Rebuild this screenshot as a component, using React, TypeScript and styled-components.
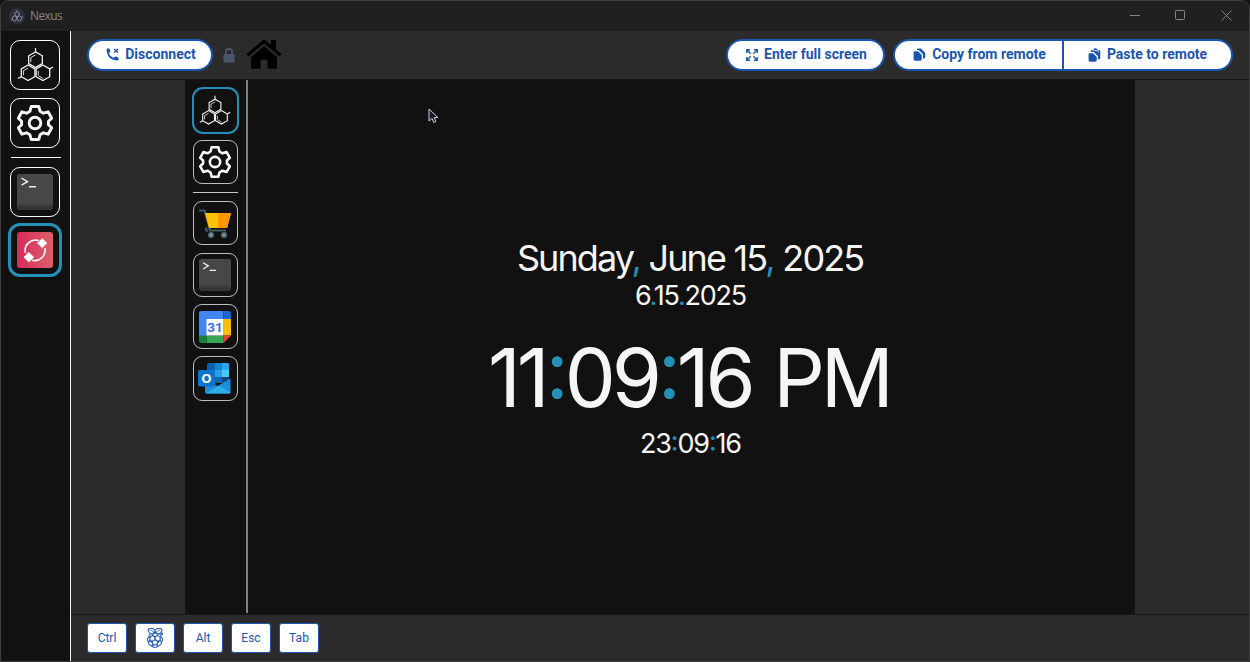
import React from 'react';
import styled, { createGlobalStyle, css } from 'styled-components';
import { SiRaspberrypi } from 'react-icons/si';

const Global = createGlobalStyle`
  * { box-sizing: border-box; }
  body { margin: 0; background: #141414; overflow: hidden; }
  button { margin: 0; font-family: inherit; }
`;

const AppWindow = styled.div`
  width: 1250px;
  height: 662px;
  display: flex;
  flex-direction: column;
  border: 1px solid #3e3e3e;
  border-radius: 9px 9px 0 0;
  background: #2b2b2b;
  overflow: hidden;
  font-family: Roboto, sans-serif;
`;

const TitleBar = styled.header`
  height: 30px;
  flex: none;
  display: flex;
  align-items: center;
  padding-left: 8px;
  background: #202020;
  color: #858585;
  font: 12px 'Open Sans', sans-serif;
`;

const AppTitle = styled.span`
  letter-spacing: -0.6px;
  padding-bottom: 2px;
`;

const AppBadge = styled.span`
  display: flex;
  align-items: center;
  justify-content: center;
  width: 16px;
  height: 16px;
  margin: 0 5px 1px 0;
  border-radius: 50%;
  background: #2c3042;
  color: #9a9ca6;
`;

const WindowControls = styled.div`
  margin-left: auto;
  display: flex;
  height: 100%;
`;

const WindowControl = styled.span`
  display: flex;
  align-items: center;
  justify-content: center;
  width: 45.5px;
  padding-bottom: 2px;
  &:nth-child(2) { padding-right: 2px; }
`;

const Body = styled.div`
  flex: 1;
  min-height: 0;
  display: flex;
`;

const Sidebar = styled.nav`
  width: 70px;
  flex: none;
  display: flex;
  flex-direction: column;
  align-items: center;
  gap: 8px;
  padding: 9px 1px 0 0;
  background: #111;
  border-right: 1px solid #f2f2f2;
`;

const Tile = styled.div<{ $active?: boolean; $small?: boolean }>`
  flex: none;
  display: flex;
  align-items: center;
  justify-content: center;
  width: ${p => (p.$small ? 45 : 50)}px;
  height: ${p => (p.$small ? 44.5 : 50)}px;
  padding-right: ${p => (p.$small ? 1.5 : 0)}px;
  border: 1px solid ${p => (p.$small ? '#bdbdbd' : '#fff')};
  border-radius: ${p => (p.$small ? 9 : 10)}px;
  color: #f5f5f5;
  ${p =>
    p.$active &&
    css`
      width: ${p.$small ? 47 : 54}px;
      height: ${p.$small ? 47 : 54}px;
      margin: ${p.$small ? '-1px 0 -1.5px' : '-2px'};
      border: ${p.$small ? 2 : 3}px solid #2490b5;
      border-radius: ${p.$small ? 11 : 12}px;
    `}
`;

const Rule = styled.hr<{ $small?: boolean }>`
  width: ${p => (p.$small ? 45 : 50)}px;
  height: 1px;
  margin: ${p => (p.$small ? '.5px 0' : '1px 0 1px 2px')};
  border: 0;
  background: ${p => (p.$small ? '#c8c8c8' : '#fff')};
`;

const Main = styled.main`
  flex: 1;
  min-width: 0;
  display: flex;
  flex-direction: column;
`;

const Toolbar = styled.div`
  height: 49px;
  flex: none;
  display: flex;
  align-items: center;
  padding: 0 16px 1px;
  border-bottom: 1px solid #161616;
`;

const Pill = styled.button<{ $w: number; $side?: 'left' | 'right' }>`
  display: flex;
  align-items: center;
  justify-content: center;
  gap: 6px;
  width: ${p => p.$w}px;
  height: 32px;
  padding: 0 0 2px ${p => (p.$side === 'right' ? 0 : 2)}px;
  border: 2px solid #1a55b0;
  border-radius: ${p => (p.$side === 'left' ? '16px 0 0 16px' : p.$side === 'right' ? '0 16px 16px 0' : '16px')};
  ${p => p.$side === 'right' && 'border-left: 0;'}
  background: #fff;
  color: #1a55b0;
  font-size: 14px;
  font-weight: 700;
  white-space: nowrap;
  svg { flex: none; margin-top: 2px; }
`;

const StatusIcons = styled.div`
  display: flex;
  align-items: center;
  gap: 11px;
  margin-left: 10px;
  svg:last-child { margin-bottom: 2px; }
  svg:first-child { margin-top: 1px; }
`;

const Actions = styled.div`
  display: flex;
  gap: 8px;
  margin-left: auto;
`;

const Joined = styled.div`
  display: flex;
`;

const Stage = styled.div`
  flex: 1;
  min-height: 0;
  display: flex;
  justify-content: center;
  padding-right: 1px;
`;

const RemoteScreen = styled.section`
  width: 950px;
  display: flex;
  background: #111;
  position: relative;
`;

const RemoteSidebar = styled.nav`
  width: 63px;
  height: 533px;
  flex: none;
  display: flex;
  flex-direction: column;
  align-items: center;
  gap: 7.3px;
  padding: 8px 0 0 1px;
  border-right: 2px solid #808080;
`;

const Clock = styled.div`
  flex: 1;
  display: flex;
  flex-direction: column;
  align-items: center;
  padding-top: 157px;
  color: #f5f5f5;
  font-family: Inter, sans-serif;
  white-space: pre;
`;

const ClockLine = styled.div<{ $size: number; $height: number; $spacing: number; $word?: number }>`
  font-size: ${p => p.$size}px;
  line-height: ${p => p.$height}px;
  letter-spacing: ${p => p.$spacing}px;
  word-spacing: ${p => p.$word ?? 0}px;
  margin-left: ${p => p.$spacing}px;
`;

const Mark = styled.span<{ $raised: boolean }>`
  color: #2490b5;
  ${p => p.$raised && "font-feature-settings: 'case';"}
`;

const Pointer = styled.svg`
  position: absolute;
  left: 243px;
  top: 28px;
`;

const KeyBar = styled.footer`
  height: 47px;
  flex: none;
  display: flex;
  align-items: center;
  gap: 8px;
  padding: 0 16px;
  border-top: 1px solid #171717;
`;

const Key = styled.button`
  display: flex;
  align-items: center;
  justify-content: center;
  width: 40px;
  height: 30px;
  padding: 0 0 1px;
  border: 1px solid #1a55b0;
  border-radius: 3px;
  background: #fff;
  color: #1a55b0;
  font-size: 12px;
`;

const Berry = styled(SiRaspberrypi)`
  stroke: currentColor;
  stroke-width: 0.4;
`;

const hex = (x: number, y: number) =>
  `M${x} ${y - 8}l7 4v8l-7 4l-7-4v-8z`;

const Molecule = ({ size, bold }: { size: number; bold?: boolean }) => (
  <svg width={size} height={size} viewBox="0 0 38 38" fill="none" stroke="currentColor" strokeWidth={bold ? 2.6 : 1.3}>
    <path d={hex(19, 13)} />
    <path d={hex(11.4, 26.5)} />
    <path d={hex(26.6, 26.5)} />
    <path d="M19 5V1M4.4 30.5L1 32.3M33.6 22.5L37 20.6" />
    {!bold && <path d="M14.2 15.5v-4.6l4.8-2.8M6.6 29v-4.6l4.8-2.8M21.8 29v-4.6M26.6 32.2L22 29.5" strokeWidth=".9" />}
  </svg>
);

const Gear = ({ size }: { size: number }) => (
  <svg width={size} height={size} viewBox="0 0 36 36" fill="none" stroke="currentColor" strokeWidth="2.9" strokeLinejoin="round">
    <path d="M14.2 1.5h7.6l1.2 4.7 3.4 2 4.7-1.4 3.6 6.5-3.3 3v3.4l3.3 3.1-3.6 6.4-4.7-1.4-3.4 2-1.2 4.7h-7.6L13 29.8l-3.4-2-4.7 1.4-3.6-6.4 3.3-3.1v-3.4l-3.3-3 3.6-6.5 4.7 1.4 3.4-2z" />
    <circle cx="18" cy="18" r="5.8" />
  </svg>
);

const Terminal = ({ size }: { size: number }) => (
  <svg width={size} height={size} viewBox="0 0 36 36">
    <rect width="36" height="36" rx="2.5" fill="#353535" />
    <path d="M2.5 0h31A2.5 2.5 0 0 1 36 2.5V30H0V2.5A2.5 2.5 0 0 1 2.5 0z" fill="#474747" />
    <rect y="30" width="36" height="2" fill="#3d3d3d" />
    <path d="M4.5 4.2l6 3.5-6 3.5M12 12.7h7" fill="none" stroke="#eee" strokeWidth="1.4" />
  </svg>
);

const Remote = () => (
  <svg width="36" height="36" viewBox="0 0 36 36">
    <defs>
      <linearGradient id="rose" x1="0" x2="1">
        <stop stopColor="#d92b5c" />
        <stop offset="1" stopColor="#dc6068" />
      </linearGradient>
    </defs>
    <rect width="36" height="36" rx="3" fill="url(#rose)" />
    <path d="M8.5 21A10.3 10.3 0 0 1 21.8 8.6M27.8 16A10.3 10.3 0 0 1 15 28.2" fill="none" stroke="#fff" strokeWidth="1.6" />
    <path d="M25.2 6.7l4.4 4.4-4.4 4.4-4.6-4.4zM11.8 20.6l4.8 4.6-4.8 4.6-4.8-4.6z" fill="#fff" stroke="#fff" strokeLinejoin="round" />
  </svg>
);

const Cart = () => (
  <svg width="33" height="33" viewBox="0 0 33 33">
    <path d="M1 3.5h5.5l5.5 20h16M9 20.5q-3 3 1 3.5" fill="none" stroke="#455a64" strokeWidth="2" />
    <path d="M7 6h26l-4 15H11z" fill="#ffc107" />
    <path d="M20 6h13l-4 15h-9z" fill="#ff9800" />
    <g fill="#90a4ae" stroke="#546e7a" strokeWidth="1.8">
      <circle cx="13" cy="28" r="2.1" />
      <circle cx="26" cy="28" r="2.1" />
    </g>
  </svg>
);

const CalendarLabel = styled.text`
  font: 700 13.5px Roboto, sans-serif;
  fill: #2d74e4;
  text-anchor: middle;
`;

const Calendar = () => (
  <svg width="32" height="32" viewBox="0 0 32 32">
    <path d="M2.5 0h22v8H8v17H0V2.5A2.5 2.5 0 0 1 2.5 0z" fill="#4285f4" />
    <path d="M24.5 0h5A2.5 2.5 0 0 1 32 2.5V8h-7.5z" fill="#1967d2" />
    <path d="M24.5 8H32v16.5h-7.5z" fill="#fbbc04" />
    <path d="M7.5 24.5h17V32h-17z" fill="#34a853" />
    <path d="M0 24.5h7.5V32h-5A2.5 2.5 0 0 1 0 29.5z" fill="#188038" />
    <path d="M24.5 24.5H32L24.5 32z" fill="#ea4335" />
    <path d="M7.5 8h17v16.5h-17z" fill="#fff" />
    <CalendarLabel x="16" y="20.7">31</CalendarLabel>
  </svg>
);

const OutlookLabel = styled.text`
  font: 700 13px 'Open Sans', sans-serif;
  fill: #fff;
  text-anchor: middle;
`;

const OutlookMark = styled.svg`
  margin-bottom: 2px;
`;

const Outlook = () => (
  <OutlookMark width="33" height="32" viewBox="0 0 33 32">
    <rect x="9" y="1" width="22" height="20" rx="1.5" fill="#0a5fae" />
    <path d="M16.5 1H24v7h-7.5z" fill="#1482cf" />
    <path d="M24 1h5.5A1.5 1.5 0 0 1 31 2.5V8h-7z" fill="#28a8ea" />
    <path d="M16.5 8H24v7h-7.5z" fill="#28a0e2" />
    <path d="M24 8h7v7h-7z" fill="#4cc8f2" />
    <path d="M16.5 15H24v6h-7.5z" fill="#0f64b4" />
    <path d="M24 15h7v6h-7z" fill="#14447d" />
    <path d="M7 17l12.5 7L32.500 16.500V30a1.6 1.6 0 0 1-1.600 1.6H8.5A1.6 1.6 0 0 1 7 30z" fill="#1d8fdc" />
    <path d="M8 31.2L21 23.5l11.500 6.800a1.6 1.6 0 0 1-1.6 1.300H8.5z" fill="#2fadea" />
    <rect y="8" width="17" height="16.5" rx="1.5" fill="#0b74cc" />
    <OutlookLabel x="8.4" y="21">O</OutlookLabel>
  </OutlookMark>
);

const HangUp = () => (
  <svg width="13" height="13" viewBox="0 0 13 13" fill="currentColor">
    <path d="M.6 1.200Q.7.600 1.300.600H3q.6 0 .7.500l.6 2.300q.1.500-.3.800L2.700 5.300Q4.200 8.600 7.500 10.100l1.300-1.300q.3-.3.800-.2l2.300.7q.6.200.6.700v1.700q0 .6-.6.700Q.8 12.400.6 1.200z" />
    <path d="M8.300.9l3.700 3.700M12 .9L8.300 4.600" stroke="currentColor" strokeWidth="1.4" fill="none" />
  </svg>
);

const Expand = () => (
  <svg width="12" height="12" viewBox="0 0 12 12" fill="none" stroke="currentColor" strokeWidth="1.5">
    <path d="M.8 4V.8H4M8 .8h3.200V4M11.200 8v3.200H8M4 11.200H.8V8" />
    <path d="M1 1l3.700 3.700M11 1L7.300 4.700M11 11L7.300 7.300M1 11l3.700-3.700" strokeWidth="1.3" />
  </svg>
);

const CopyIcon = () => (
  <svg width="13" height="13" viewBox="0 0 13 13" fill="currentColor">
    <path d="M1.500 3.300H5L8.800 7v4.300q0 1.400-1.400 1.400H2Q.6 12.700.6 11.300V4.700q0-1.400.9-1.400z" />
    <path d="M4.700.5H8L12.200 4.800v4.400q0 1.200-1.200 1.300H10V6.300L5.700 2.100H3.800Q4 .5 4.700.5z" />
  </svg>
);

const PasteIcon = () => (
  <svg width="13" height="14" viewBox="0 0 13 14" fill="currentColor">
    <path d="M1.400 5.200H5L8.800 9v3.300q0 1.400-1.400 1.400H2Q.6 13.700.6 12.300V6q0-.8.8-.8z" />
    <path d="M3.300 2.200H5Q6-.5 8.500.5 9.500.9 9.700 2.200H11q1.300 0 1.300 1.300V10q0 1.300-1.300 1.300h-1V8.200L5.700 4.100H2.600q0-1.900.7-1.900z" />
    <path d="M5.400 2.600h3.800L11 4.400" stroke="#fff" strokeWidth=".8" fill="none" />
  </svg>
);

const Lock = () => (
  <svg width="12" height="15" viewBox="0 0 12 15">
    <rect x=".5" y="6" width="11" height="8.5" rx="1.2" fill="#4a5568" />
    <path d="M3 6.500V3.800a3 3 0 0 1 6 0v2.700" fill="none" stroke="#4a5568" strokeWidth="1.8" />
  </svg>
);

const House = () => (
  <svg width="36" height="30" viewBox="0 0 36 30">
    <path d="M18 7.300L31 18v10.500q0 1.200-1.200 1.200H21.500v-9h-6.800v9H6.300q-1.200 0-1.200-1.200V18z" />
    <path d="M1.500 16.200L18 2.300l16.500 13.900" fill="none" stroke="#000" strokeWidth="3.2" />
    <path d="M25 1h5v11l-5-4.200z" />
  </svg>
);

const clock = (text: string) =>
  text.split(/([,:.])/).map((part, i) => (i % 2 ? <Mark key={i} $raised={part === ':'}>{part}</Mark> : part));

export default function App() {
  return (
    <>
      <Global />
      <AppWindow>
        <TitleBar>
          <AppBadge><Molecule size={12} bold /></AppBadge>
          <AppTitle>Nexus</AppTitle>
          <WindowControls>
            <WindowControl><svg width="10" height="10" stroke="#858585"><path d="M0 5.500h10" /></svg></WindowControl>
            <WindowControl><svg width="10" height="10" fill="none" stroke="#858585"><rect x=".5" y=".5" width="9" height="9" rx="1" /></svg></WindowControl>
            <WindowControl><svg width="11" height="11" stroke="#858585"><path d="M.5.5l10 10M10.500.5l-10 10" /></svg></WindowControl>
          </WindowControls>
        </TitleBar>
        <Body>
          <Sidebar>
            <Tile><Molecule size={37} /></Tile>
            <Tile><Gear size={36} /></Tile>
            <Rule />
            <Tile><Terminal size={36} /></Tile>
            <Tile $active><Remote /></Tile>
          </Sidebar>
          <Main>
            <Toolbar>
              <Pill $w={126}><HangUp />Disconnect</Pill>
              <StatusIcons><Lock /><House /></StatusIcons>
              <Actions>
                <Pill $w={159}><Expand />Enter full screen</Pill>
                <Joined>
                  <Pill $w={171} $side="left"><CopyIcon />Copy from remote</Pill>
                  <Pill $w={169} $side="right"><PasteIcon />Paste to remote</Pill>
                </Joined>
              </Actions>
            </Toolbar>
            <Stage>
              <RemoteScreen>
                <RemoteSidebar>
                  <Tile $small $active><Molecule size={32} /></Tile>
                  <Tile $small><Gear size={32} /></Tile>
                  <Rule $small />
                  <Tile $small><Cart /></Tile>
                  <Tile $small><Terminal size={32} /></Tile>
                  <Tile $small><Calendar /></Tile>
                  <Tile $small><Outlook /></Tile>
                </RemoteSidebar>
                <Clock>
                  <ClockLine $size={36} $height={43} $spacing={-1.9} $word={0.3}>{clock('Sunday, June 15, 2025')}</ClockLine>
                  <ClockLine $size={27} $height={32} $spacing={-1.25}>{clock('6.15.2025')}</ClockLine>
                  <ClockLine $size={81} $height={132} $spacing={-4.2} $word={3}>{clock('11:09:16 PM')}</ClockLine>
                  <ClockLine $size={27} $height={0} $spacing={-1.15}>{clock('23:09:16')}</ClockLine>
                </Clock>
                <Pointer width="11" height="16" viewBox="0 0 11 16">
                  <path d="M1 1v12l3-2.700 1.700 4.200 2.200-.9-1.700-4H10z" fill="#15172c" stroke="#cfcfcf" strokeWidth="1" />
                </Pointer>
              </RemoteScreen>
            </Stage>
            <KeyBar>
              <Key>Ctrl</Key>
              <Key><Berry size={20} /></Key>
              <Key>Alt</Key>
              <Key>Esc</Key>
              <Key>Tab</Key>
            </KeyBar>
          </Main>
        </Body>
      </AppWindow>
    </>
  );
}
